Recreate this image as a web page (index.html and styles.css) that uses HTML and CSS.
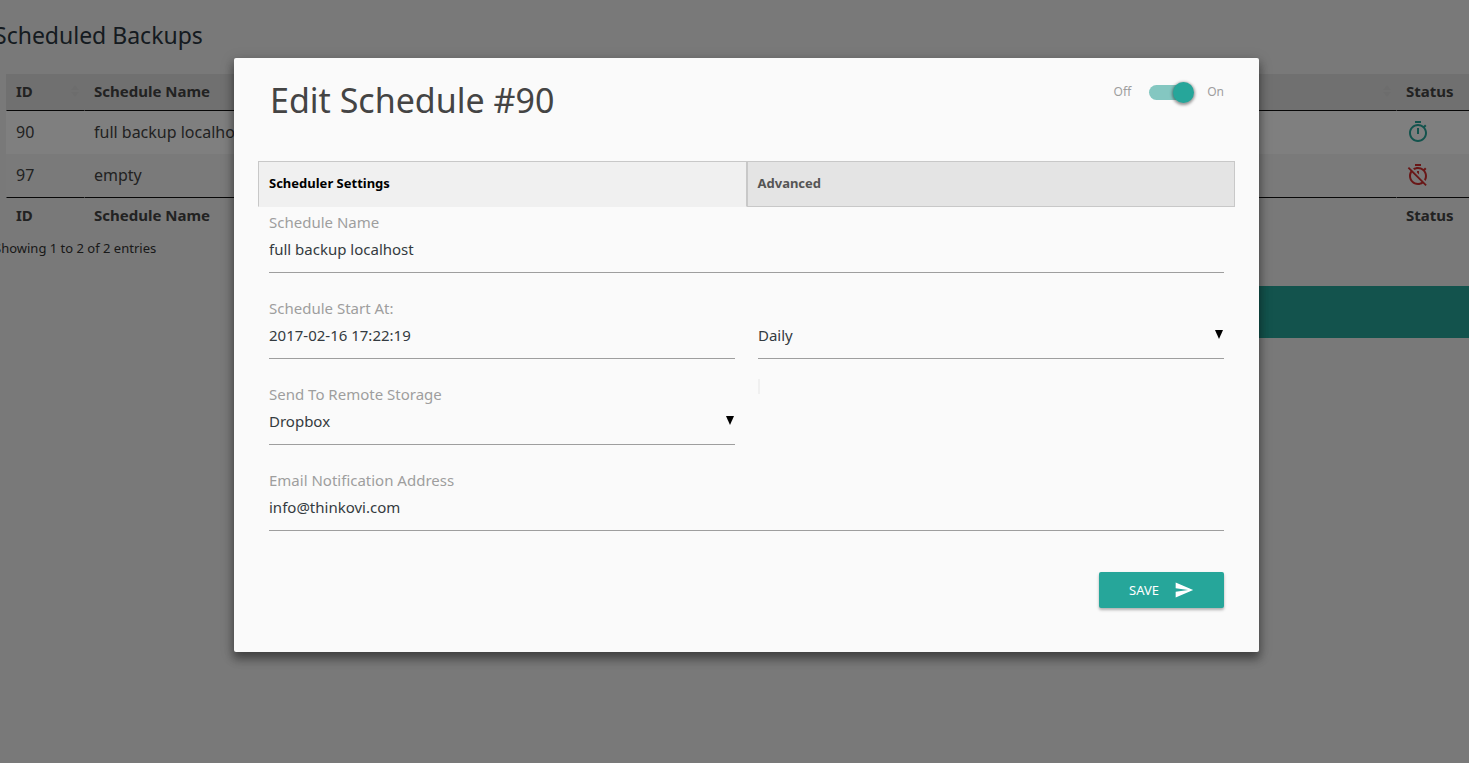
FILE: index.html
```html
<!DOCTYPE html>
<html lang="en">
<head>
<meta charset="utf-8">
<title>Scheduled Backups</title>
<link rel="stylesheet" href="styles.css">
</head>
<body>
<main class="page">
  <h1 class="page-title">Scheduled Backups</h1>
  <table class="schedules">
    <colgroup><col class="col-id"><col><col class="col-status"></colgroup>
    <thead>
      <tr>
        <th scope="col"><span class="head">ID <svg class="sort" viewBox="0 0 8 12"><path d="M4 0l4 5H0zM4 12L0 7h8z"/></svg></span></th>
        <th scope="col"><span class="head">Schedule Name <svg class="sort" viewBox="0 0 8 12"><path d="M4 0l4 5H0zM4 12L0 7h8z"/></svg></span></th>
        <th scope="col">Status</th>
      </tr>
    </thead>
    <tbody>
      <tr>
        <td>90</td><td>full backup localhost</td>
        <td><svg class="state state-on" viewBox="0 0 24 24" role="img" aria-label="Enabled"><path d="M15 1H9v2h6V1zm-4 13h2V8h-2v6zm8.03-6.61l1.42-1.42c-.43-.51-.9-.99-1.41-1.41l-1.42 1.42C16.07 4.74 14.12 4 12 4c-4.97 0-9 4.03-9 9s4.02 9 9 9 9-4.03 9-9c0-2.12-.74-4.07-1.97-5.61zM12 20c-3.87 0-7-3.13-7-7s3.13-7 7-7 7 3.13 7 7-3.13 7-7 7z"/></svg></td>
      </tr>
      <tr>
        <td>97</td><td>empty</td>
        <td><svg class="state state-off" viewBox="0 0 24 24" role="img" aria-label="Disabled"><path d="M19.04 4.55l-1.42 1.42C16.07 4.74 14.12 4 12 4c-1.83 0-3.53.55-4.95 1.48l1.46 1.46C9.53 6.35 10.73 6 12 6c3.87 0 7 3.13 7 7 0 1.27-.35 2.47-.94 3.49l1.45 1.45C20.45 16.53 21 14.83 21 13c0-2.12-.74-4.07-1.97-5.61l1.42-1.42-1.41-1.42zM15 1H9v2h6V1zm-4 8.44l2 2V8h-2v1.44zM3.02 4L1.75 5.27 4.5 8.03C3.55 9.45 3 11.16 3 13c0 4.97 4.02 9 9 9 1.84 0 3.55-.55 4.98-1.5l2.5 2.5 1.27-1.27-7.71-7.71L3.02 4zM12 20c-3.87 0-7-3.13-7-7 0-1.28.35-2.48.95-3.52l9.56 9.56c-1.03.61-2.23.96-3.51.96z"/></svg></td>
      </tr>
    </tbody>
    <tfoot>
      <tr><th>ID</th><th>Schedule Name</th><th>Status</th></tr>
    </tfoot>
  </table>
  <p class="summary">Showing 1 to 2 of 2 entries</p>
  <div class="banner"></div>
</main>

<div class="overlay">
  <form class="modal" role="dialog" aria-labelledby="modal-title">
    <header class="modal-head">
      <h2 class="modal-title" id="modal-title">Edit Schedule #90</h2>
      <label class="switch"><span>Off</span><input type="checkbox" class="toggle" checked><span>On</span></label>
    </header>
    <div class="tabs" role="tablist">
      <button type="button" class="tab tab-active" role="tab" aria-selected="true">Scheduler Settings</button>
      <button type="button" class="tab" role="tab" aria-selected="false">Advanced</button>
    </div>
    <div class="fields">
      <div class="field wide">
        <label class="caption" for="name">Schedule Name</label>
        <input class="control" id="name" type="text" value="full backup localhost">
      </div>
      <div class="field">
        <label class="caption" for="start">Schedule Start At:</label>
        <input class="control" id="start" type="text" value="2017-02-16 17:22:19">
      </div>
      <div class="field">
        <div class="caption"></div>
        <div class="picker">
          <select class="control" aria-label="Frequency"><option>Daily</option></select>
          <svg class="caret" viewBox="0 0 8 9"><path d="M0 0h8L4 9z"/></svg>
        </div>
      </div>
      <div class="field">
        <label class="caption" for="storage">Send To Remote Storage</label>
        <div class="picker">
          <select class="control" id="storage"><option>Dropbox</option></select>
          <svg class="caret" viewBox="0 0 8 9"><path d="M0 0h8L4 9z"/></svg>
        </div>
      </div>
      <div class="stub"></div>
      <div class="field wide">
        <label class="caption" for="email">Email Notification Address</label>
        <input class="control" id="email" type="text" value="info@thinkovi.com">
      </div>
    </div>
    <footer class="modal-foot">
      <button type="submit" class="save">SAVE <svg class="send" viewBox="0 0 24 24"><path d="M2.01 21L23 12 2.01 3 2 10l15 2-15 2z"/></svg></button>
    </footer>
  </form>
</div>
</body>
</html>
```
FILE: styles.css
```css
* { box-sizing: border-box; }

body {
  margin: 0;
  min-height: 100vh;
  overflow: hidden;
  background: #f2f2f2;
  color: #343a40;
  font-family: "Noto Sans", "Open Sans", sans-serif;
  font-size: 15px;
}

button, input, select { font: inherit; }

.page { margin-left: -6px; }

.page-title {
  margin: 0;
  padding: 19px 0 23px;
  color: #2b3640;
  font-size: 23px;
  font-weight: 400;
  line-height: 32px;
}

.schedules {
  width: calc(100% - 12px);
  margin-left: 12px;
  table-layout: fixed;
  border-collapse: separate;
  border-spacing: 0;
  color: #444;
  font-size: 16px;
  line-height: 24px;
}

.col-id { width: 78px; }
.col-status { width: 73px; }

.schedules th, .schedules td {
  height: 43px;
  padding: 0 10px 2px;
  text-align: left;
  white-space: nowrap;
}

.schedules th {
  height: 36px;
  padding: 0 9px 2px;
  border-left: 1px solid transparent;
  font-size: 15px;
  font-weight: 700;
}

.schedules thead th { height: 37px; border-bottom: 1px solid #111; }
.schedules tfoot th { border-top: 1px solid #111; }
.schedules thead tr { background: #e1e1e1; }
.schedules tbody tr:first-child { background: #fff; }
.schedules tbody tr:last-child { background: #f4f4f4; }

.head { display: flex; align-items: center; justify-content: space-between; margin-right: -4px; }
.sort { width: 8px; height: 12px; fill: #dadada; }

.state { display: block; width: 24px; height: 24px; }
.state-on { fill: #26a69a; }
.state-off { fill: #d32f2f; }

.summary {
  margin: 0;
  padding: 5px 0 28px;
  color: #333;
  font-size: 13px;
  line-height: 20px;
}

.banner { height: 52px; margin-left: 50%; background: #26a69a; }

.overlay {
  position: absolute;
  inset: 0;
  padding: 58px 210px 0 234px;
  background: rgba(0, 0, 0, .5);
}

.modal {
  padding: 16px 24px 44px;
  border-radius: 2px;
  background: #fafafa;
  box-shadow: 0 8px 10px 1px rgba(0, 0, 0, .14), 0 3px 14px 2px rgba(0, 0, 0, .12), 0 5px 8px rgba(0, 0, 0, .3);
}

.modal-head {
  display: flex;
  justify-content: space-between;
  align-items: flex-start;
  padding: 0 11px 35px 12px;
}

.modal-title {
  margin: 0;
  color: #444;
  font-size: 34px;
  font-weight: 400;
  line-height: 52px;
}

.switch {
  display: flex;
  align-items: center;
  gap: 18px;
  padding-top: 8px;
  color: #9e9e9e;
  font-size: 12px;
  line-height: 20px;
}

.toggle {
  display: flex;
  align-items: center;
  justify-content: flex-end;
  width: 40px;
  height: 15px;
  margin: 0;
  appearance: none;
  border-radius: 15px;
  background: #84c7c1;
}

.toggle::before {
  content: "";
  flex: none;
  width: 21px;
  height: 21px;
  margin-right: -5px;
  border-radius: 50%;
  background: #26a69a;
  box-shadow: 0 1px 3px 1px rgba(0, 0, 0, .4);
}

.tabs { display: grid; grid-template-columns: 1fr 1fr; }

.tab {
  height: 46px;
  padding: 0 10px 2px;
  border: 1px solid #c8c8c8;
  background: #e4e4e4;
  color: #555;
  font-size: 13px;
  font-weight: 700;
  text-align: left;
}

.tab-active { border-bottom-color: #f0f0f0; background: #f0f0f0; color: #000; }

.fields {
  display: grid;
  grid-template-columns: 1fr 1fr;
  column-gap: 23px;
  padding: 0 11px;
}

.wide { grid-column: 1 / -1; }
.field { padding: 5px 0 20px; }
.caption { display: block; height: 20px; color: #9e9e9e; line-height: 20px; }

.control {
  display: block;
  width: 100%;
  height: 41px;
  margin: 0;
  padding: 0 0 7px;
  appearance: none;
  border: 0;
  border-bottom: 1px solid #9e9e9e;
  border-radius: 0;
  outline: 0;
  background: transparent;
  color: #343a40;
}

.picker { position: relative; }
.caret { position: absolute; top: 12px; right: 1px; width: 8px; height: 9px; fill: #000; pointer-events: none; }
.stub { width: 2px; height: 15px; background: #f0f0f0; }

.modal-foot { display: flex; justify-content: flex-end; padding: 21px 11px 0; }

.save {
  display: flex;
  align-items: center;
  gap: 15px;
  height: 36px;
  padding: 0 30px;
  border: 0;
  border-radius: 2px;
  background: #26a69a;
  box-shadow: 0 2px 3px rgba(0, 0, 0, .3);
  color: #fff;
  font-size: 13px;
}

.send { width: 20px; height: 20px; fill: #fff; }
```
